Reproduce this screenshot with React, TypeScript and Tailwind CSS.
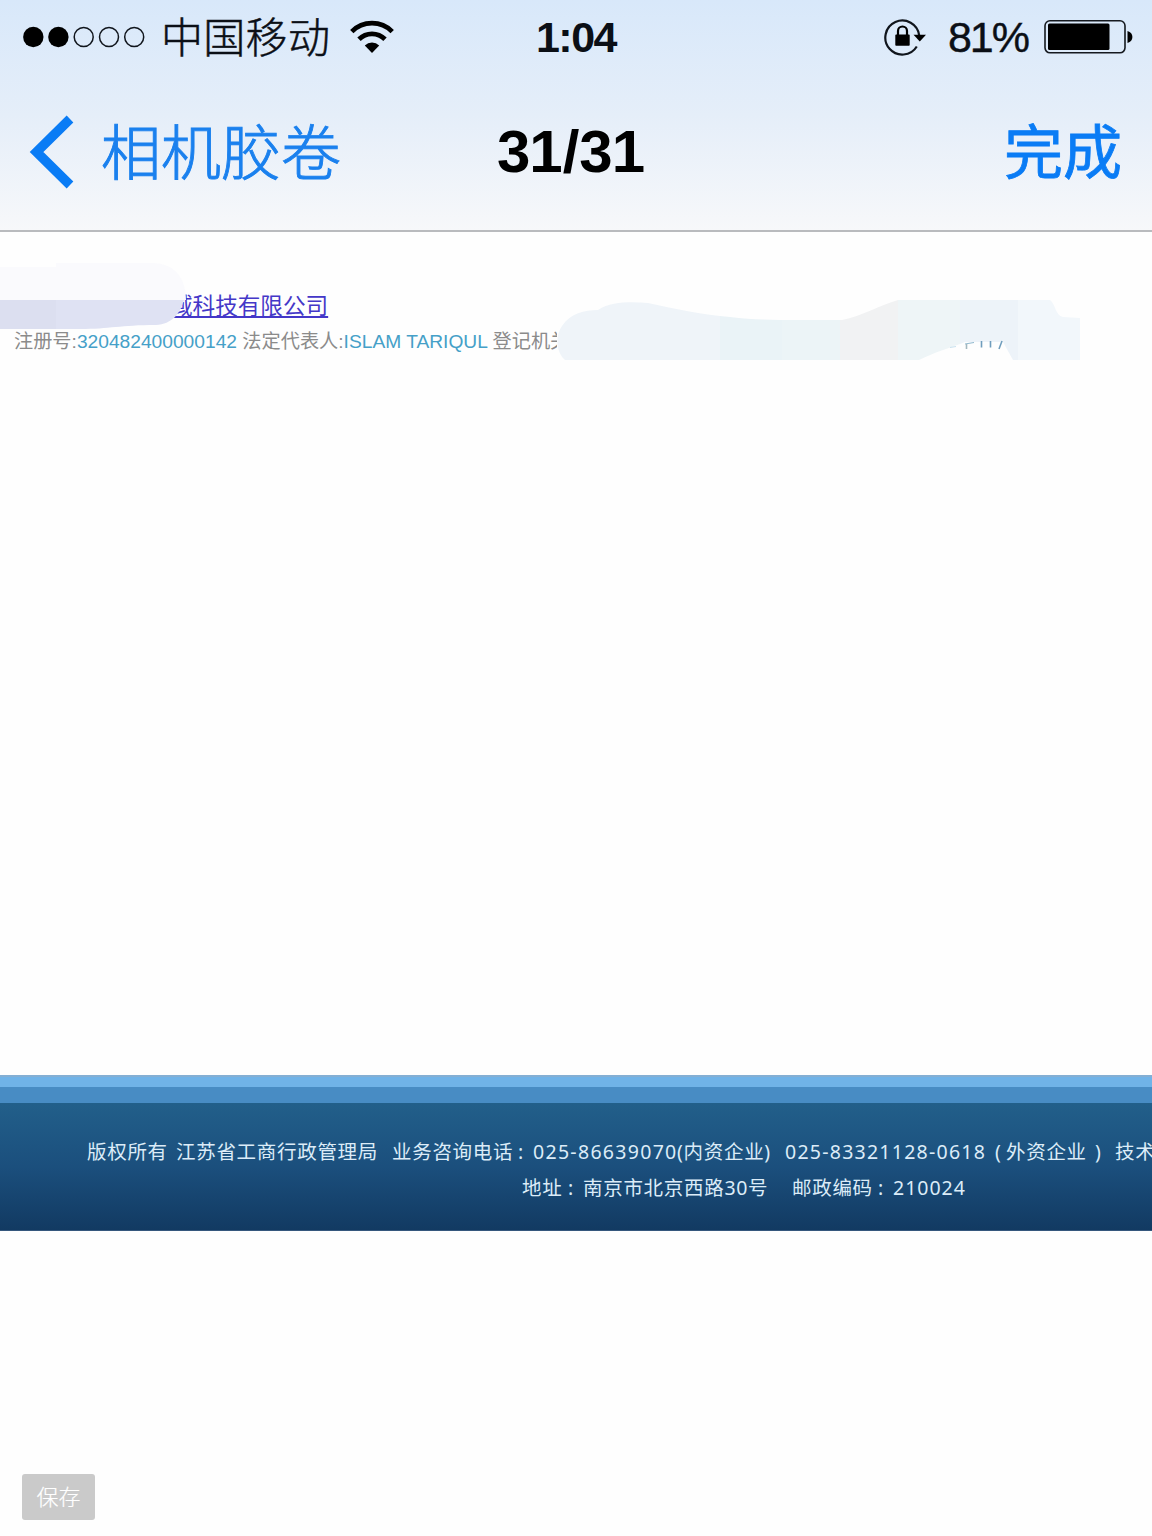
import type { ReactNode } from "react"

const SignalDots = () => (
    <svg width="124" height="24" viewBox="0 0 124 24" className="block">
        <circle cx="11.3" cy="12" r="10.2" fill="#000" />
        <circle cx="36.4" cy="12" r="10.2" fill="#000" />
        {[61.7, 87, 112.2].map((cx) => (
            <circle key={cx} cx={cx} cy="12" r="9.5" fill="none" stroke="#10151c" strokeWidth="1.5" />
        ))}
    </svg>
)

const WifiIcon = () => (
    <svg width="44" height="34" viewBox="0 0 44 34" className="block">
        <g fill="none" stroke="#000" strokeWidth="4.8">
            <path d="M1.8 11.6 A28.5 28.5 0 0 1 42.2 11.6" />
            <path d="M9 19.2 A18.4 18.4 0 0 1 35 19.2" />
        </g>
        <path d="M22 33 L14.8 25.6 A10.2 10.2 0 0 1 29.2 25.6 Z" fill="#000" />
    </svg>
)

const RotationLock = () => (
    <svg width="43" height="38" viewBox="0 0 43 38" className="block">
        <path d="M35.2 17.5 A17 17 0 1 0 32.8 28.5" fill="none" stroke="#10151c" strokeWidth="2.2" />
        <path d="M29.5 16.8 H42 L35.8 23.6 Z" fill="#000" />
        <rect x="11.3" y="16.6" width="14.4" height="11.2" rx="0.8" fill="#000" />
        <path d="M14 17 V13 A4.5 4.5 0 0 1 23 13 V17" fill="none" stroke="#000" strokeWidth="2.2" />
    </svg>
)

const Battery = () => (
    <svg width="90" height="36" viewBox="0 0 90 36" className="block">
        <rect x="1" y="1.8" width="80" height="32" rx="5" fill="none" stroke="#15191f" strokeWidth="1.6" />
        <rect x="4" y="4.6" width="61.5" height="26.4" rx="1.5" fill="#000" />
        <path d="M83.5 12 C90 13.5 90 22.5 83.5 24 Z" fill="#000" />
    </svg>
)

// painted-over areas on top of the search result
const LeftSmudge = () => (
    <svg width="190" height="70" viewBox="0 0 190 70" className="absolute left-0 top-[28px]">
        <path d="M0 7 H56 V3 H152 C176 3 186 20 186 40 H0 Z" fill="#fafafd" />
        <path d="M0 40 H184 C180 54 172 64 156 65 C120 65 110 69 80 69 H0 Z" fill="#dfe2f3" />
        <path d="M0 40 H56 V69 H0 Z" fill="#dcdff0" />
    </svg>
)

const RightSmudge = () => (
    <svg width="526" height="64" viewBox="556 298 526 64" className="absolute left-[556px] top-[66px]">
        <defs>
            <clipPath id="smudge">
                <path d="M565 360 C556 352 555 336 562 326 C571 313 584 310 598 310 C612 301 632 302 648 303 C676 309 703 315 730 317 C755 320 775 320 800 320 H842 C862 316 880 305 898 300 H1050 C1056 305 1055 315 1063 317 L1080 318 V360 H1013 L1003 342 H965 C950 348 935 352 919 360 Z" />
            </clipPath>
        </defs>
        <g clipPath="url(#smudge)">
            <rect x="550" y="298" width="170" height="62" fill="#eff4f9" />
            <rect x="720" y="298" width="62" height="62" fill="#eaf3f7" />
            <rect x="782" y="298" width="58" height="62" fill="#ecf4f7" />
            <rect x="840" y="298" width="58" height="62" fill="#f1f2f3" />
            <rect x="898" y="298" width="62" height="62" fill="#eef5f7" />
            <rect x="960" y="298" width="58" height="62" fill="#edf3f9" />
            <rect x="1018" y="298" width="64" height="62" fill="#f2f7fb" />
        </g>
        <g fill="none" stroke="#6f9dbd" strokeWidth="1.6">
            <path d="M965 344 L974 342.5" stroke="#8fb8cf" strokeWidth="1" />
            <path d="M966.5 344 V349" stroke="#a3b8c0" />
            <path d="M981.5 341 V347.5" />
            <path d="M990.5 341 V347.5" />
            <path d="M1002 341 L999 349" />
        </g>
        <path d="M950 347.5 L956 346.5" stroke="#c9e2ef" strokeWidth="1" />
    </svg>
)

const Blue = ({ children }: { children: ReactNode }) => <span className="text-[#45a0c8]">{children}</span>

const App = () => {
    return (
        <div className="w-[1152px] h-[1536px] overflow-hidden flex flex-col bg-[#fefefe] font-['Liberation_Sans','Noto_Sans_CJK_SC',sans-serif]">
            <header className="h-[232px] shrink-0 border-b-2 border-[#b9bbbe] bg-linear-to-b from-[#d8e8fa] via-[#e5eef9] to-[#f7f8fa]">
                <div className="h-[74px] grid grid-cols-[1fr_auto_1fr] items-center pl-[22px] pr-[18px] text-[#0b0f16]">
                    <div className="flex items-center">
                        <SignalDots />
                        <span className="ml-[15px] pb-[5px] text-[42px] leading-none tracking-[0.3px] font-['Noto_Sans_CJK_SC',sans-serif] font-light [-webkit-text-stroke:0.5px]">中国移动</span>
                        <span className="ml-[20px]"><WifiIcon /></span>
                    </div>
                    <span className="pr-[4px] text-[43px] leading-none font-bold tracking-[-1.5px]">1:04</span>
                    <div className="flex items-center justify-end">
                        <RotationLock />
                        <span className="ml-[21px] text-[43px] leading-none tracking-[-2px] [-webkit-text-stroke:0.4px]">81%</span>
                        <span className="ml-[16px]"><Battery /></span>
                    </div>
                </div>
                <div className="h-[156px] grid grid-cols-[1fr_auto_1fr] items-start pt-[40px] pl-[29px] pr-[30px] text-[#0a7cf5]">
                    <div className="flex items-start">
                        <svg width="46" height="76" viewBox="0 0 46 76" className="block">
                            <path d="M41 5 L7.5 38 L41 71" fill="none" stroke="#0a7cf5" strokeWidth="9.5" />
                        </svg>
                        <span className="ml-[26px] text-[60px] leading-[70px] font-light [-webkit-text-stroke:0.9px] text-[#1a80ee] font-['Noto_Sans_CJK_SC',sans-serif]">相机胶卷</span>
                    </div>
                    <h1 className="flex pr-[10px] text-[60px] leading-[76px] font-bold tracking-[-1px] text-black">
                        31<span className="px-[1px]">/</span>31
                    </h1>
                    <span className="text-[59px] leading-[70px] text-right font-normal [-webkit-text-stroke:0.8px] font-['Noto_Sans_CJK_SC',sans-serif]">完成</span>
                </div>
            </header>

            <main className="relative h-[843px] shrink-0 pl-[14px] pt-[60px] whitespace-nowrap">
                <a className="block h-[32px] ml-[156px] text-[22.6px] leading-[30px] text-[#4437c8] underline decoration-2 underline-offset-[2px]">域科技有限公司</a>
                <p className="h-[36px] text-[19.2px] leading-[36px] text-[#8b8b8b]">
                    注册号:<Blue>320482400000142</Blue> 法定代表人:<Blue>ISLAM TARIQUL</Blue> 登记机关
                </p>
                {/* hides the tail of the last word */}
                <div className="absolute left-[557px] top-[90px] w-[30px] h-[38px] bg-[#fefefe]" />
                <LeftSmudge />
                <RightSmudge />
            </main>

            <footer className="h-[156px] shrink-0 flex flex-col whitespace-nowrap text-[#dcecf8] font-['Noto_Sans','Noto_Sans_CJK_SC',sans-serif] text-[19.5px] leading-[36px]">
                <div className="h-[12px] bg-[#70b3e8] border-t-2 border-[#84afd4]" />
                <div className="h-[16px] bg-[#488cc4]" />
                <div className="h-[128px] pt-[31px] bg-linear-to-b from-[#225f8a] via-[#1b4f7d] to-[#123a62] border-b border-[#35577d]">
                    <div className="flex pl-[87px] tracking-[0.7px]">
                        <span className="w-[89px] shrink-0">版权所有</span>
                        <span className="w-[216px] shrink-0">江苏省工商行政管理局</span>
                        <span className="w-[126px] shrink-0">业务咨询电话</span>
                        <span className="w-[15px] shrink-0">:</span>
                        <span className="w-[144px] shrink-0 tracking-[1.3px]">025-86639070</span>
                        <span className="w-[108px] shrink-0">(内资企业)</span>
                        <span className="w-[210px] shrink-0 tracking-[1.25px]">025-83321128-0618</span>
                        <span className="w-[11px] shrink-0">(</span>
                        <span className="w-[89px] shrink-0">外资企业</span>
                        <span className="w-[20px] shrink-0">)</span>
                        <span className="shrink-0">技术</span>
                    </div>
                    <div className="flex pl-[522px] tracking-[0.7px]">
                        <span className="w-[46px] shrink-0">地址</span>
                        <span className="w-[15px] shrink-0">:</span>
                        <span className="w-[209px] shrink-0">南京市北京西路30号</span>
                        <span className="w-[86px] shrink-0">邮政编码</span>
                        <span className="w-[15px] shrink-0">:</span>
                        <span className="shrink-0 tracking-[1px]">210024</span>
                    </div>
                </div>
            </footer>

            <div className="mt-auto mb-[16px] ml-[22px]">
                <button className="block w-[73px] h-[46px] pb-[3px] rounded-[3px] bg-[#cacaca] text-white text-[22px] leading-[43px] font-light [-webkit-text-stroke:0.2px] font-['Noto_Sans_CJK_SC',sans-serif]">保存</button>
            </div>
        </div>
    )
}

export default App
